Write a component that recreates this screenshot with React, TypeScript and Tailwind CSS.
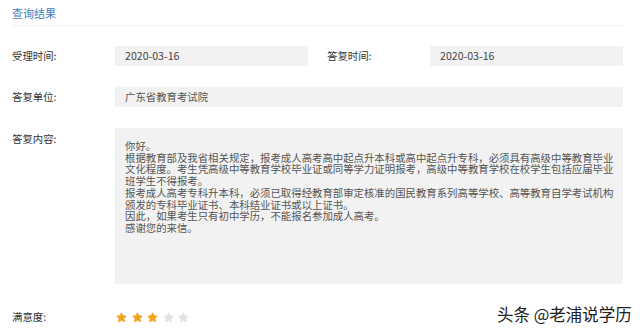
import React from "react";

const font = { fontFamily: '"Noto Sans CJK SC", "Noto Sans", sans-serif' };

function Star({ on }: { on: boolean }) {
  return (
    <svg width="11" height="11" viewBox="0 0 24 24">
      <path
        d="M12 1.8l3.1 6.6 7.1.9-5.2 4.9 1.4 7.1L12 17.8l-6.4 3.5 1.4-7.1-5.2-4.9 7.1-.9z"
        fill={on ? "#f5a11c" : "#e3e3e3"}
        stroke={on ? "#f5a11c" : "#e3e3e3"}
        strokeWidth="2"
        strokeLinejoin="round"
      />
    </svg>
  );
}

const lines = [
  "你好。",
  "根据教育部及我省相关规定，报考成人高考高中起点升本科或高中起点升专科，必须具有高级中等教育毕业",
  "文化程度。考生凭高级中等教育学校毕业证或同等学力证明报考，高级中等教育学校在校学生包括应届毕业",
  "班学生不得报考。",
  "报考成人高考专科升本科，必须已取得经教育部审定核准的国民教育系列高等学校、高等教育自学考试机构",
  "颁发的专科毕业证书、本科结业证书或以上证书。",
  "因此，如果考生只有初中学历，不能报名参加成人高考。",
  "感谢您的来信。",
];

export default function App() {
  return (
    <div className="relative w-[640px] h-[332px] bg-white overflow-hidden" style={font}>
      <div className="pl-[12px] pr-[17px]">
        <div className="h-[26px] flex items-center border-b border-[#f0f0f0] text-[11px] text-[#3f7fbf] pt-[2px]">
          查询结果
        </div>
        <div className="pt-[20px] flex flex-col gap-[21px] text-[10.4px] text-[#333]">
          <div className="flex items-center h-[20px]">
            <div className="w-[103px]">受理时间:</div>
            <div className="w-[193px] h-[20px] bg-[#f2f2f2] pl-[10px] flex items-center text-[#444] text-[10.6px]">2020-03-16</div>
            <div className="w-[19px]" />
            <div className="w-[103px]">答复时间:</div>
            <div className="w-[193px] h-[20px] bg-[#f2f2f2] pl-[10px] flex items-center text-[#444] text-[10.6px]">2020-03-16</div>
          </div>
          <div className="flex items-center h-[20px]">
            <div className="w-[103px]">答复单位:</div>
            <div className="flex-1 h-[20px] bg-[#f2f2f2] pl-[10px] flex items-center text-[#555]">广东省教育考试院</div>
          </div>
          <div className="flex">
            <div className="w-[103px] pt-[3px] leading-[16px]">答复内容:</div>
            <div className="flex-1 h-[156px] bg-[#f2f2f2] pl-[10px] pt-[12px] text-[#555] leading-[11.7px]">
              {lines.map((l, i) => (
                <div key={i} className="whitespace-nowrap">{l}</div>
              ))}
            </div>
          </div>
          <div className="flex items-center h-[20px] mt-[2px]">
            <div className="w-[103px]">满意度:</div>
            <div className="flex items-center gap-[4.5px] pl-[1px]">
              <Star on />
              <Star on />
              <Star on />
              <Star on={false} />
              <Star on={false} />
            </div>
          </div>
        </div>
      </div>
      <div
        className="absolute left-[497px] top-[304px] text-[16.5px] text-[#222] whitespace-nowrap leading-[20px]"
        style={{ textShadow: "0 0 2px #fff, 0 0 2px #fff, 0 0 3px #fff" }}
      >
        头条 @老浦说学历
      </div>
    </div>
  );
}
